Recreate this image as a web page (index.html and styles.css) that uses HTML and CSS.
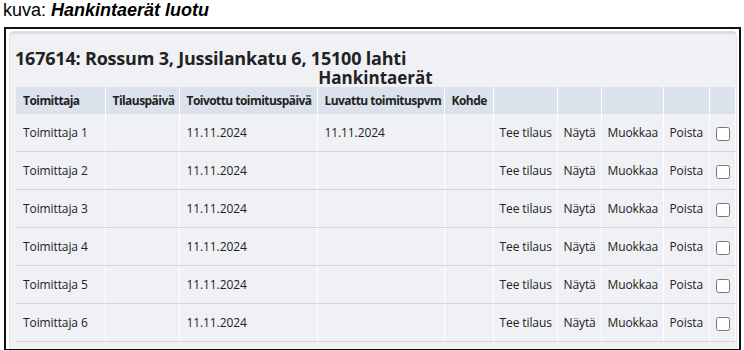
FILE: index.html
```html
<!DOCTYPE html>
<html lang="fi">
<head>
    <meta charset="UTF-8">
    <meta name="viewport" content="width=device-width, initial-scale=1.0">
    <title>Hankintaerät luotu</title>
    <link rel="stylesheet" href="styles.css">
</head>
<body>
    <p class="caption">kuva: <b><i>Hankintaerät luotu</i></b></p>

    <div class="shot">
        <div class="panel">
            <h2 class="site-title">167614: Rossum 3, Jussilankatu 6, 15100 lahti</h2>
            <h3 class="list-title">Hankintaerät</h3>

            <table class="lots">
                <colgroup>
                    <col style="width: 89px">
                    <col style="width: 74px">
                    <col style="width: 138px">
                    <col style="width: 127px">
                    <col style="width: 49px">
                    <col style="width: 64px">
                    <col style="width: 44px">
                    <col style="width: 62px">
                    <col style="width: 46px">
                    <col style="width: 26px">
                </colgroup>
                <thead>
                    <tr>
                        <th>Toimittaja</th>
                        <th>Tilauspäivä</th>
                        <th>Toivottu toimituspäivä</th>
                        <th>Luvattu toimituspvm</th>
                        <th>Kohde</th>
                        <th></th>
                        <th></th>
                        <th></th>
                        <th></th>
                        <th></th>
                    </tr>
                </thead>
                <tbody>
                    <tr>
                        <td>Toimittaja 1</td>
                        <td></td>
                        <td>11.11.2024</td>
                        <td>11.11.2024</td>
                        <td></td>
                        <td class="action">Tee tilaus</td>
                        <td class="action">Näytä</td>
                        <td class="action">Muokkaa</td>
                        <td class="action">Poista</td>
                        <td class="check"><input type="checkbox"></td>
                    </tr>
                    <tr>
                        <td>Toimittaja 2</td>
                        <td></td>
                        <td>11.11.2024</td>
                        <td></td>
                        <td></td>
                        <td class="action">Tee tilaus</td>
                        <td class="action">Näytä</td>
                        <td class="action">Muokkaa</td>
                        <td class="action">Poista</td>
                        <td class="check"><input type="checkbox"></td>
                    </tr>
                    <tr>
                        <td>Toimittaja 3</td>
                        <td></td>
                        <td>11.11.2024</td>
                        <td></td>
                        <td></td>
                        <td class="action">Tee tilaus</td>
                        <td class="action">Näytä</td>
                        <td class="action">Muokkaa</td>
                        <td class="action">Poista</td>
                        <td class="check"><input type="checkbox"></td>
                    </tr>
                    <tr>
                        <td>Toimittaja 4</td>
                        <td></td>
                        <td>11.11.2024</td>
                        <td></td>
                        <td></td>
                        <td class="action">Tee tilaus</td>
                        <td class="action">Näytä</td>
                        <td class="action">Muokkaa</td>
                        <td class="action">Poista</td>
                        <td class="check"><input type="checkbox"></td>
                    </tr>
                    <tr>
                        <td>Toimittaja 5</td>
                        <td></td>
                        <td>11.11.2024</td>
                        <td></td>
                        <td></td>
                        <td class="action">Tee tilaus</td>
                        <td class="action">Näytä</td>
                        <td class="action">Muokkaa</td>
                        <td class="action">Poista</td>
                        <td class="check"><input type="checkbox"></td>
                    </tr>
                    <tr>
                        <td>Toimittaja 6</td>
                        <td></td>
                        <td>11.11.2024</td>
                        <td></td>
                        <td></td>
                        <td class="action">Tee tilaus</td>
                        <td class="action">Näytä</td>
                        <td class="action">Muokkaa</td>
                        <td class="action">Poista</td>
                        <td class="check"><input type="checkbox"></td>
                    </tr>
                </tbody>
            </table>
        </div>
    </div>
</body>
</html>
```

FILE: styles.css
```css
body {
    margin: 0;
    background-color: white;
    font-family: "Liberation Sans", Arial, sans-serif;
    height: 350px;
    overflow: hidden;
}
.caption {
    margin: 0;
    padding: 0 0 0 3px;
    font-size: 18px;
    line-height: 21px;
    color: #000;
}
.shot {
    margin: 6px 3px 0 4px;
    height: 318px;
    border: 2px solid #111;
    padding: 2px 2px 0 3px;
    overflow: hidden;
    background-color: white;
}
.panel {
    height: 400px;
    background-color: #f0f1f5;
    border: 1px solid #e3e4e8;
    border-top: 3px solid #dcdde1;
    border-radius: 5px 5px 0 0;
    padding: 0 0 0 6px;
    font-family: "Open Sans", "Noto Sans", sans-serif;
    color: #222;
}
.site-title {
    margin: 0 0 0 -1px;
    padding-top: 15px;
    font-size: 18px;
    line-height: 19px;
    font-weight: bold;
    letter-spacing: -0.2px;
}
.list-title {
    margin: 0;
    padding-top: 1px;
    width: 719px;
    text-align: center;
    font-size: 17px;
    line-height: 17px;
    font-weight: bold;
}
.lots {
    margin-top: 1px;
    width: 719px;
    table-layout: fixed;
    border-collapse: collapse;
    font-size: 12px;
}
.lots th {
    height: 27px;
    padding: 0 7px;
    text-align: left;
    font-weight: bold;
    letter-spacing: -0.55px;
    background-color: #dbe2ec;
    border-right: 1px solid white;
    white-space: nowrap;
}
.lots td {
    height: 37px;
    padding: 0 7px;
    border-right: 1px solid white;
    border-bottom: 1px solid #d3d4d7;
    white-space: nowrap;
    letter-spacing: -0.1px;
}
.lots td.action {
    padding: 0 6px;
}
.lots td.check {
    padding: 0 5px 0 6px;
}
.lots input {
    width: 14px;
    height: 14px;
    margin: 0;
    vertical-align: middle;
}
```
